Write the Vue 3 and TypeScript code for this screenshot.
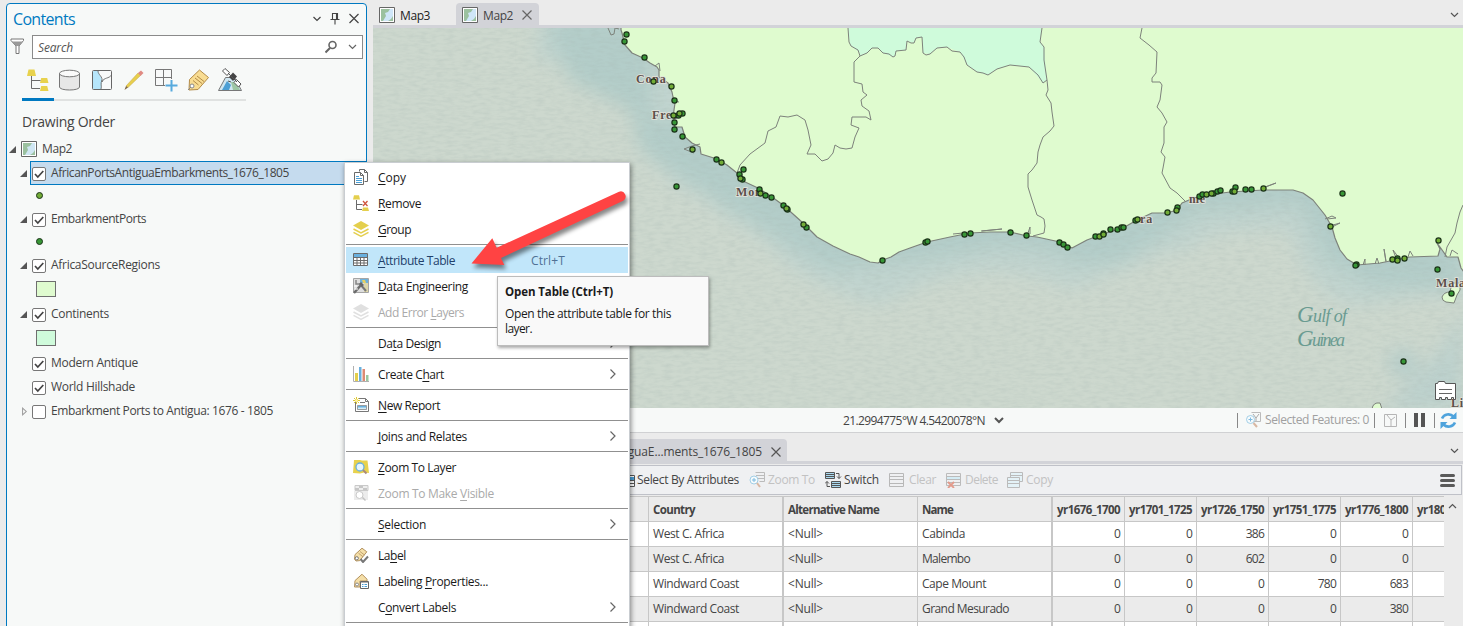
<script setup lang="ts">
import type { Directive } from 'vue'

// Tunes tracking so that a label takes up the given width in pixels.
const vFit: Directive<HTMLElement, number> = {
  mounted(el, { value }) {
    const count = (el.textContent ?? '').length
    if (!value || !count) return
    const width = el.getBoundingClientRect().width
    el.style.letterSpacing = `${(value - width) / count}px`
  },
}

interface MenuItem { label?: string; w?: number; icon?: string; sub?: boolean; off?: boolean; hot?: boolean; key?: string }
interface Layer { label: string; w: number; arrow?: 'open' | 'closed'; checked: boolean; selected?: boolean; symbol?: string }

const tagShape = '<path d="M1.5 12.2 2 7.6 9 1.2 13.8 4.8 6.8 13.6 3 14z" fill="#f5dfa8" stroke="#b3925f"/><path d="M7 4.5 11.5 8M5.5 6.2l4.5 3.6" stroke="#b3925f" stroke-width=".8"/><circle cx="3.8" cy="11.3" r="1.6" fill="#fff" stroke="#777"/>'

const icons: Record<string, string> = {
  copy: '<path d="M6.500 2.500v-2h5l3 3v9h-3" fill="#fff" stroke="#6a6a6a"/><path d="M11.500.500v3h3" stroke="#6a6a6a"/><path d="M1.500 3.500h6l3 3v9h-9z" fill="#fff" stroke="#6a6a6a"/><path d="M7.500 3.500v3h3" stroke="#6a6a6a"/><path d="M3 7.500h3M3 9.500h6M3 11.500h6M3 13.500h6" stroke="#4a9fd6"/>',
  remove: '<path d="M0 4.500 1 .3h5l1 4.200z" fill="#e4cf4d"/><path d="M3.500 5v9.500H9M3.500 9.500h6" stroke="#6a6a6a"/><path d="m10 6 4.500 5M14.500 6 10 11" stroke="#d0553e" stroke-width="1.300"/><path d="m9 16 1-3.500h5l1 3.500z" fill="#e4cf4d"/>',
  group: '<path d="M8 0 16 4.500 8 9 0 4.500z" fill="#e4cf4d"/><path d="m.5 8 7.500 4L15.500 8M.5 11.300l7.500 4 7.500-4" stroke="#e4cf4d" stroke-width="1.500"/>',
  groupOff: '<path d="M8 0 16 4.500 8 9 0 4.500z" fill="#e0e0e0"/><path d="m.5 8 7.500 4L15.500 8M.5 11.300l7.500 4 7.500-4" stroke="#e0e0e0" stroke-width="1.500"/>',
  table: '<path d="M.5 1.500h14v12H.5z" fill="#fff"/><path d="M1 2h13v3H1z" fill="#69b0de"/><path d="M.5 1.500h14v12H.5zM.5 5.500h14M.5 8.500h14M.5 11h14M4 5v8M7.500 5v8M11 5v8" stroke="#6a6a6a"/>',
  engineering: '<path d="M.5.500h15v14H.5z" fill="#dedede" stroke="#a5a5a5"/><path d="M7 1h8v4H7z" fill="#6db2dd"/><path d="M11 5h4v9h-4z" fill="#ddd6a9"/><path d="M9 2h3l1 3h-3z" fill="#e8d061"/><path d="m1 15 7-8" stroke="#6b6b6b" stroke-width="2.400"/><path d="m7 6 6 7" stroke="#777" stroke-width="2"/><path d="M3 2v4h4" stroke="#888" stroke-width="1.500"/><path d="m6 6 2-2 3 3-2 2z" fill="#666"/><path d="M1 8h3M2 11h3" stroke="#fff"/>',
  chart: '<path d="M.5 0v15.500H16" stroke="#b0b0b0"/><path d="M2 7h3v8H2z" fill="#e4cf4d"/><path d="M6 1h2.500v14H6z" fill="#69b0de"/><path d="M9.500 3H12v12H9.500z" fill="#dd8a74"/><path d="M13 9h2.500v6H13z" fill="#9bc7a0"/>',
  report: '<path d="M2.500 5v9.500h13v-10l-3-3H6" fill="#fff" stroke="#777"/><path d="M12.500 1.500v3h3" stroke="#777"/><path d="M4.500 8.500h9v4h-9z" fill="#d4edf8" stroke="#777" stroke-width=".7"/><path d="M5 9h8v1.500H5z" fill="#69b0de"/><path d="M7 5.500h5" stroke="#777"/><path d="M3.500 0v7M0 3.500h7M1 1l5 5M6 1 1 6" stroke="#dfc93a"/><circle cx="3.500" cy="3.500" r="1.500" fill="#fff3a0"/>',
  zoomLayer: '<path d="M1 1h6l2 .5h5.500L16 14l-5-.5-4 1L0 14z" fill="#e8d24d"/><circle cx="7" cy="8" r="4" fill="#e7f6fd" stroke="#69b0de" stroke-width="1.300"/><path d="m10 11 3.500 3.500" stroke="#a98a7c" stroke-width="2"/>',
  zoomVisible: '<path d="M2 .5h13v5H2z" fill="#eee" stroke="#c9c9c9"/><path d="M2 3h4v2H2zM10 3h4v2h-4zM6 1h4v2H6z" fill="#c6c6c6"/><path d="M1 6h14v9H1z" fill="#ececec"/><circle cx="6.500" cy="10" r="3.500" fill="#fff" stroke="#c9c9c9"/><path d="m9.500 12.500 3 3" stroke="#c2c2c2" stroke-width="1.500"/>',
  label: tagShape + '<path d="m7.500 12 2.500 3 5-5.500" stroke="#777" stroke-width="2"/>',
  labelProps: '<path d="M1.500 14 2 7.600 9 1.200l5 5V8H7v6z" fill="#f5dfa8" stroke="#b3925f"/><circle cx="4" cy="11.500" r="1.500" fill="#fff" stroke="#888"/><path d="M7.500 8.500h8v7h-8z" fill="#fff" stroke="#666"/><path d="M8 8h7v1.500H8z" fill="#666"/><path d="M9 11.500h1.500m1 0H14M9 13.500h1.500m1 0H14" stroke="#4a9fd6"/>',
}

const menu: MenuItem[] = [
  { label: '_Copy', w: 28, icon: 'copy' },
  { label: '_Remove', w: 43, icon: 'remove' },
  { label: '_Group', w: 33, icon: 'group' },
  {},
  { label: '_Attribute Table', w: 77, icon: 'table', hot: true, key: 'Ctrl+T' },
  { label: '_Data Engineering', w: 90, icon: 'engineering' },
  { label: 'Add Error _Layers', w: 86, icon: 'groupOff', off: true },
  {},
  { label: 'Da_ta Design', w: 63, sub: true },
  {},
  { label: 'Create C_hart', w: 66, icon: 'chart', sub: true },
  {},
  { label: '_New Report', w: 62, icon: 'report' },
  {},
  { label: '_Joins and Relates', w: 89, sub: true },
  {},
  { label: '_Zoom To Layer', w: 78, icon: 'zoomLayer' },
  { label: 'Zoom To Make _Visible', w: 116, icon: 'zoomVisible', off: true },
  {},
  { label: '_Selection', w: 48, sub: true },
  {},
  { label: 'La_bel', w: 28, icon: 'label' },
  { label: 'Labeling _Properties...', w: 110, icon: 'labelProps' },
  { label: 'C_onvert Labels', w: 78, sub: true },
  {},
]

function mnemonic(label: string): [string, string, string] {
  const i = label.indexOf('_')
  return [label.slice(0, i), label[i + 1], label.slice(i + 2)]
}

const layers: Layer[] = [
  { label: 'AfricanPortsAntiguaEmbarkments_1676_1805', w: 238, arrow: 'open', checked: true, selected: true, symbol: 'port lime' },
  { label: 'EmbarkmentPorts', w: 95, arrow: 'open', checked: true, symbol: 'port' },
  { label: 'AfricaSourceRegions', w: 109, arrow: 'open', checked: true, symbol: 'swatch region' },
  { label: 'Continents', w: 58, arrow: 'open', checked: true, symbol: 'swatch continent' },
  { label: 'Modern Antique', w: 87, checked: true },
  { label: 'World Hillshade', w: 84, checked: true },
  { label: 'Embarkment Ports to Antigua: 1676 - 1805', w: 222, arrow: 'closed', checked: false },
]

const years = ['yr1676_1700', 'yr1701_1725', 'yr1726_1750', 'yr1751_1775', 'yr1776_1800']
const rows = [
  { country: 'West C. Africa', cw: 71, name: 'Cabinda', nw: 43, v: [0, 0, 386, 0, 0] },
  { country: 'West C. Africa', cw: 71, name: 'Malembo', nw: 48, v: [0, 0, 602, 0, 0] },
  { country: 'Windward Coast', cw: 86, name: 'Cape Mount', nw: 64, v: [0, 0, 0, 780, 683] },
  { country: 'Windward Coast', cw: 86, name: 'Grand Mesurado', nw: 87, v: [0, 0, 0, 0, 380] },
]

// x, y, and 1 for a port with Antigua embarkments
const ports: number[][] = [
  [626, 34], [624, 41], [644, 57], [653, 81, 1], [671, 86, 1], [674, 100], [678, 115], [682, 113], [673, 115, 1], [679, 113, 1],
  [674, 122], [674, 129], [682, 136], [692, 149, 1], [716, 159], [721, 162, 1], [743, 169], [739, 174], [742, 179], [740, 178, 1],
  [676, 186], [759, 189], [760, 193, 1], [765, 195], [771, 197], [783, 205], [787, 209], [786, 208, 1], [806, 227], [803, 224, 1], [882, 260],
  [925, 242], [927, 241], [964, 234], [970, 233], [1010, 232], [1026, 235], [1059, 242], [1063, 244], [1067, 247],
  [1095, 236], [1099, 236, 1], [1103, 233], [1103, 234, 1], [1110, 229], [1117, 229], [1121, 227], [1123, 227], [1135, 220], [1137, 219, 1],
  [1167, 212, 1], [1177, 207], [1176, 210, 1], [1199, 196], [1202, 194], [1206, 194, 1], [1213, 193], [1211, 193, 1], [1217, 191], [1220, 190],
  [1232, 191], [1235, 187], [1234, 191, 1], [1245, 189], [1251, 189], [1263, 188, 1], [1342, 193], [1330, 226, 1],
  [1356, 264], [1355, 265], [1397, 258], [1392, 259, 1], [1397, 260, 1], [1404, 258, 1], [1438, 240, 1], [1437, 269], [1451, 293], [1403, 361],
]

const coast = 'L621 30 622 33 625 45 632 53 643 58 650 63 657 67 659 70 659 77 668 83 672 92 673 97 675 103 673 117 675 127 682 127 685 137 692 143 700 147 701 154 717 159 727 165 737 173 743 181 758 188 772 197 783 205 793 214 803 223 817 237 833 246 850 254 859 257 870 262 878 263 883 260 891 257 899 252 910 248 927 242 950 237 970 233 990 232 1010 232 1027 236 1037 237 1060 242 1072 248 1087 240 1103 234 1123 228 1137 220 1152 213 1167 213 1177 210 1182 203 1189 200 1200 196 1230 192 1263 190 1293 190 1303 193 1313 200 1325 215 1332 227 1335 238 1340 250 1347 259 1357 265 1380 263 1410 257 1438 256 1440 249 1437 243 1440 247 1447 257 1458 257 1461 268 1464 272'
</script>

<template>
  <div class="app">
    <aside class="contents">
      <header class="title">
        <span v-fit="62">Contents</span>
        <svg width="46" height="14" viewBox="0 0 46 14" fill="none" stroke="#444">
          <path d="m1.500 5 3.500 3.500L8.500 5" stroke-width="1.200" />
          <path d="M20.500 1.500h5v6h-5zM18.500 7.500h9M23 8v4.500M24.500 2v5" stroke-width="1.100" />
          <path d="m37.500 2 9 9M46.500 2l-9 9" stroke-width="1.200" />
        </svg>
      </header>
      <div class="search">
        <svg class="funnel" width="15" height="17" viewBox="0 0 15 17">
          <path d="M1 1h12.500v1.500L9 8v7.500H6V8L1 2.500z" fill="#fff" stroke="#777" /><path d="M2 3.500h11L9 8H6z" fill="#999" />
        </svg>
        <div class="field">
          <i v-fit="35">Search</i>
          <svg width="32" height="14" viewBox="0 0 32 14" fill="none" stroke="#666">
            <circle cx="7.500" cy="5" r="3.500" stroke-width="1.600" /><path d="m5 8-4.500 4.500" stroke-width="2" /><path d="m24 5 3.500 3.500L31 5" stroke-width="1.200" />
          </svg>
        </div>
      </div>
      <svg class="views" width="226" height="38" viewBox="21 67 226 38" fill="none">
        <path d="M54 100h192" stroke="#e0e2e1" stroke-width="2" /><path d="M22 99.500h32" stroke="#0079c1" stroke-width="3" />
        <path d="m27 76 1.500-6.500h6L36 76zM40 83l1.200-5h6l1.300 5zM40 91l1.200-5h6l1.300 5z" fill="#e8d24d" /><path d="M31.500 76v12.500H40M31.500 80.500h9" stroke="#6a6a6a" />
        <path d="M59.500 73v14c0 4 20 4 20 0V73" fill="#e7e7e7" stroke="#777" /><ellipse cx="69.500" cy="73.500" rx="10" ry="3.300" fill="#fafafa" stroke="#777" />
        <path d="M92.500 70.500h19v19h-19z" fill="#f8f9f9" /><path d="M93 71h5l4 9-1 9h-8z" fill="#b6e6fb" /><path d="M98 71c0 4 5 5 4 11 2-5 7-3 9.500-7M102 80c-2 4 0 6-1 9" stroke="#777" /><rect x="92.500" y="70.500" width="19" height="19" rx="1" stroke="#666" />
        <path d="m126 86 12-13 2.500 2.500-12.500 12z" fill="#e8cf4d" stroke="#c2a545" stroke-width=".5" /><path d="m126 86-1.500 4 3.500-2.500z" fill="#7c643f" /><path d="m138 73 3-2.500 2.500 2.500-3 3z" fill="#e08a83" />
        <path d="M155.500 69.500h16v16h-16zM163.500 69.500v16M155.500 77.500h16" fill="#f8f9f9" stroke="#777" /><path d="M165 79h11v10h-11z" fill="#f7f9f8" /><path d="M163.500 69.500v16M155.500 77.500h16" stroke="#777" /><path d="M171.500 80v11.500M165.500 85.500h12" stroke="#57aadd" stroke-width="2" />
        <path d="m189.500 79.500 10-9.500 9 7.500-10.500 12-9 .5z" fill="#f8dc92" stroke="#b38b47" /><path d="m197 76 7 5.500M195 78l7 5.500M193 80.500l5.500 4.500" stroke="#b38b47" /><circle cx="192" cy="86" r="2" fill="#fff" stroke="#888" /><path d="m191 87-3 3" stroke="#888" />
        <path d="m218.500 90.500 7-13h9l7 13z" fill="#d1e7f1" stroke="#777" /><path d="m222 90 5-9 4 4-2 5z" fill="#4d9fd4" /><path d="M231 82h5l4 8h-7z" fill="#9ec7a5" /><path d="m225 68.500 4.500 4-2.500 3-4.500-4.500zM236.500 79.500l4.500 4.500-2.500 3-4.500-4.500z" fill="#fff" stroke="#555" /><path d="m229 77 4-4.500 4 4-4 4.500z" fill="#444" /><path d="m228 73 9 9M231 82l-3-1" stroke="#555" />
      </svg>
      <h2><span v-fit="93">Drawing Order</span></h2>
      <div class="row root">
        <i class="tri open" />
        <svg class="mapicon" width="16" height="16" viewBox="0 0 16 16"><path d="M.5.500h15v15H.5z" fill="#fff" stroke="#666" /><path d="M2 2h12v12H2z" fill="#cfe6f3" /><path d="M2 2h9L9 5 6 6l1 3-3 5H2zM9 14l3-2 2-3v5z" fill="#9bc19f" /></svg>
        <span v-fit="30">Map2</span>
      </div>
      <template v-for="l in layers" :key="l.label">
        <div class="row" :class="{ selected: l.selected }">
          <i class="tri" :class="l.arrow" />
          <div class="body">
            <span class="check"><svg v-if="l.checked" width="12" height="12" viewBox="0 0 12 12"><path d="m2 6 2.800 3L10.300 3" fill="none" stroke="#444" stroke-width="1.700" /></svg></span>
            <span v-fit="l.w">{{ l.label }}</span>
          </div>
        </div>
        <div v-if="l.symbol" class="symrow" :class="{ tall: l.symbol.startsWith('swatch') }"><b :class="l.symbol" /></div>
      </template>
    </aside>

    <main>
      <nav class="tabs">
        <div v-for="t in ['Map3', 'Map2']" :key="t" class="tab" :class="{ active: t === 'Map2' }">
          <svg width="16" height="16" viewBox="0 0 16 16"><path d="M.5.500h15v15H.5z" fill="#fff" stroke="#666" /><path d="M2 2h12v12H2z" fill="#cfe6f8" /><path d="M2 2h9L9 5 6 6l1 3-3 5H2zM9 14l3-2 2-3v5z" fill="#9bc19f" /></svg>
          <span v-fit="30">{{ t }}</span>
          <svg v-if="t === 'Map2'" class="x" width="10" height="10" viewBox="0 0 10 10"><path d="m.5.500 9 9M9.500.500l-9 9" stroke="#666" stroke-width="1.200" /></svg>
        </div>
      </nav>
      <svg class="map" width="1090" height="380" viewBox="373 28 1090 380">
        <defs>
          <filter id="paper" x="0" y="0" width="100%" height="100%">
            <feTurbulence type="fractalNoise" baseFrequency="0.11 0.34" numOctaves="2" seed="8" />
            <feColorMatrix values="0 0 0 0 .38  0 0 0 0 .47  0 0 0 0 .44  .7 0 0 0 -.26" />
          </filter>
          <filter id="soft" x="-10%" y="-20%" width="120%" height="140%"><feGaussianBlur stdDeviation="9" /></filter>
        </defs>
        <path d="M373 28h1090v380H373z" fill="#cdd8ce" />
        <g filter="url(#soft)" fill="none">
          <path :d="'M540 20 ' + coast" stroke="#c1d4cf" stroke-width="80" stroke-linejoin="round" />
          <path d="M545 20 570 80 630 110 640 150 700 190 780 240 830 270 910 262 1000 247 1040 250 1080 265 1120 262 1200 212 1300 205 1325 260 1370 285 1463 290V120H650V20z" fill="#b3cdc9" />
          <path d="M1440 350 1463 310v100h-80z" fill="#bdd1cd" /><circle cx="1403" cy="363" r="14" fill="#b5cdca" />
        </g>
        <path d="M373 28h1090v380H373z" filter="url(#paper)" opacity=".7" />
        <path :d="'M621 27 ' + coast + ' V27z'" fill="#dffbcf" />
        <path d="M848 27 850 45 860 53V56L867 53 872 48 878 48 883 53 893 57 895 56 896 51 906 50 907 41 914 43 916 38 922 37 923 53 930 54 937 48 947 47 960 52 967 65 977 72 988 75 997 69 1010 65 1029 67 1043 83 1047 80 1044 47 1040 42 1042 27z" fill="#cffbdb" />
        <g fill="none" stroke="#7d827b" stroke-width="1" stroke-linejoin="round">
          <path :d="'M621 27 ' + coast" stroke-width="1.200" />
          <path d="M848 28 849 42 851 46 858 50 860 56 867 53 872 48 878 48 883 53 889 54 893 57 895 56 896 51 906 50 907 41 911 43 914 43 916 38 922 37 923 53 926 55 930 54 937 48 947 47 952 51 960 52 964 57 967 65 977 72 983 73 988 75 997 69 1010 65 1029 67 1038 75 1043 83 1047 80 1044 60 1044 47 1040 42 1042 28M1047 80 1048 90 1046 95 1051 103 1052 112 1054 126 1050 131 1043 137 1040 145 1038 152 1037 163 1032 170 1028 174 1028 187 1032 200 1037 215 1041 217 1044 219 1045 226 1044 233 1033 236" />
          <path d="M1142 28 1140 38 1149 45 1157 52 1156 73 1152 78 1152 82 1160 82 1162 85 1160 100 1157 107 1162 113 1167 122 1164 127 1164 143 1161 152 1165 157 1163 168 1162 173 1170 188 1177 193 1185 201" />
          <path d="M860 56 854 62 854 82 862 84 863 92 867 95 861 100 862 106 869 111 871 120 866 117 852 117 851 125 859 128 855 137 852 148 846 149 840 148 835 145 833 153 828 159 822 161 815 154 807 154 811 145 808 130 805 120 797 115 788 117 780 116 776 127 768 131 765 143 750 154 740 165 737 173" />
          <path d="M1463 205 1460 212 1457 223 1455 233 1447 247 1445 257M608 28 611 35 614 34 615 28 619 29M655 66l4-3 1 8M673 101l6 1M684 149l8-3 8-2M684 149l10 4M953 234l10-1M981 231l21-2-20 2M1027 236l3-9v7M1263 188l13-5-11 4M1325 219l7-3 4 2-9 1M1332 227l8-4-7 2M1363 265l2-6v6M1375 264l2-6 2 6M1386 262l-2-13 2 12M1396 258l-3-8 6 8M1408 257l2-6 3 5M1450 256l2-6 6 4" />
          <path d="M1442 297q2-5 8-5l2-9h8v7l-3 5-3 8-8-1q-4-1-4-5z" fill="#dffbcf" /><path d="M1372 409q1-7 8-6l2 6" fill="#dffbcf" />
        </g>
        <g class="place">
          <text x="636" y="83">Cona</text><text x="652" y="119">Free</text><text x="736" y="196">Mon</text><text x="1140" y="223">ra</text><text x="1189" y="203">me</text><text x="1436" y="287">Mala</text><text x="1451" y="407">Li</text>
        </g>
        <g class="gulf"><text x="1297" y="322" textLength="50"><tspan class="cap">G</tspan>ulf of</text><text x="1297" y="346" textLength="48"><tspan class="cap">G</tspan>uinea</text></g>
        <circle v-for="(p, i) in ports" :key="i" :cx="p[0] + 0.5" :cy="p[1] + 0.5" r="2.600" :fill="p[2] ? '#72ac36' : '#379636'" stroke="#1b3318" stroke-width="1.200" />
        <path d="M1435.500 383.500h2l1-2h6l1 2h10v16h-2v-2h-2v2h-4v-2h-2v2h-4v-2h-2v2h-4z" fill="#fff" stroke="#555" /><path d="M1439 389.500h13M1439 393.500h13" stroke="#666" />
      </svg>
      <div class="status">
        <span class="coord" v-fit="142">21.2994775°W 4.5420078°N</span>
        <svg class="chev" width="10" height="7" viewBox="0 0 10 7"><path d="m1 1 4 4 4-4" fill="none" stroke="#555" stroke-width="2" /></svg>
        <i class="bar" />
        <svg class="sel" width="17" height="16" viewBox="0 0 17 16" fill="none"><path d="M6.500.500h9v9h-9" stroke="#bbb" /><path d="m8 2 3 4 3-4M11 6v3" stroke="#aaa" /><circle cx="5.500" cy="7.500" r="4" fill="#f6fbfd" stroke="#a3cfe6" /><path d="M3.500 7.500h4m-2-2v4" stroke="#7fbbe0" /><path d="m8.500 11 3.500 4" stroke="#d9b8a3" stroke-width="2" /></svg>
        <span class="dim" v-fit="104">Selected Features: 0</span>
        <i class="bar b2" />
        <svg class="frame" width="13" height="13" viewBox="0 0 13 13" fill="none" stroke="#b5b5b5"><path d="M.5.500h12v12H.5zM3 1l4 5 4-3M7 6v6" /></svg>
        <i class="bar b3" /><i class="pause" /><i class="bar b4" />
        <svg class="sync" width="17" height="17" viewBox="0 0 17 17" fill="none" stroke="#4ea3dc" stroke-width="2.600"><path d="M2 6.500C4 2 10 1 13.500 4.500M15 10.500C13 15 7 16 3.500 12.500" /><path d="M16.500 0v7h-7zM.5 17v-7h7z" fill="#4ea3dc" stroke="none" /></svg>
      </div>
      <nav class="tabs lower">
        <div class="tab active"><span v-fit="223">AfricanPortsAntiguaE...ments_1676_1805</span><svg class="x" width="10" height="10" viewBox="0 0 10 10"><path d="m.5.500 9 9M9.500.500l-9 9" stroke="#555" stroke-width="1.200" /></svg></div>
      </nav>
      <div class="tools">
        <svg class="t0" width="16" height="16" viewBox="0 0 16 16" fill="none"><path d="M.5 3.500h13v11H.5z" fill="#fff" stroke="#555" /><path d="M1 5h12v3H1z" fill="#4a9fd6" /><path d="M1 8.500h12M1 11.500h12" stroke="#555" /></svg>
        <span v-fit="102">Select By Attributes</span>
        <svg class="t1" width="16" height="16" viewBox="0 0 16 16" fill="none"><path d="M6.500.500h9v9h-5M7 3.500h8M9 6.500h6" stroke="#bbb" /><circle cx="5" cy="8" r="4" fill="#f6fbfd" stroke="#a3cfe6" /><path d="M3 8h4M5 6v4" stroke="#7fbbe0" /><path d="m8 11 3 4" stroke="#d9b8a3" stroke-width="2" /></svg>
        <span class="gray" v-fit="47">Zoom To</span>
        <svg class="t2" width="17" height="16" viewBox="0 0 17 16" fill="none"><path d="M.5.500h9v6h-9zM6.500 9.500h9v6h-9z" fill="#a9d9f0" stroke="#555" /><path d="M.5 2.500h9m-9 2h9M6.500 11.500h9m-9 2h9" stroke="#555" /><path d="M11 1.500h3v5m-2-2 2 2 2-2M5 14.500H2v-5m-2 2 2-2 2 2" stroke="#555" /></svg>
        <span v-fit="35">Switch</span>
        <svg class="t3" width="16" height="14" viewBox="0 0 16 14" fill="none" stroke="#b8b8b8"><path d="M.5.500h14v13H.5zM.5 3.500h14m-14 3h14m-14 4h14" /></svg>
        <span class="gray" v-fit="27">Clear</span>
        <svg class="t4" width="16" height="16" viewBox="0 0 16 16" fill="none"><path d="M.5 1.500h14v12H.5zM.5 4.500h14m-14 3h14m-14 3h14" stroke="#bbb" /><path d="M1 5h13v2H1z" fill="#d4ecf5" /><path d="m2 10 6 6M8 10l-6 6" stroke="#e29a8b" stroke-width="1.800" /></svg>
        <span class="gray" v-fit="33">Delete</span>
        <svg class="t5" width="16" height="16" viewBox="0 0 16 16" fill="none"><path d="M3.500.500h12v9h-12z" fill="#e4f2f7" stroke="#bbb" /><path d="M3.500 3.500h12" stroke="#bbb" /><path d="M.5 5.500h12v10H.5z" fill="#e4f2f7" stroke="#bbb" /><path d="M.5 8.500h12m-12 3h12" stroke="#bbb" /></svg>
        <span class="gray" v-fit="27">Copy</span>
        <svg class="burger" width="15" height="13" viewBox="0 0 15 13"><path d="M1.500 1.500h12m-12 5h12m-12 5h12" stroke="#5a5a5a" stroke-width="3" stroke-linecap="round" /></svg>
      </div>
      <div class="grid">
        <div class="tr th">
          <span class="c0" /><span class="c1"><em v-fit="42">Country</em></span><span class="c2"><em v-fit="91">Alternative Name</em></span><span class="c3"><em v-fit="31">Name</em></span>
          <span v-for="y in years" :key="y" class="cy"><em v-fit="63">{{ y }}</em></span><span class="cy last"><em v-fit="63">yr1801_1825</em></span>
        </div>
        <div v-for="r in rows" :key="r.name" class="tr">
          <span class="c0" /><span class="c1"><em v-fit="r.cw">{{ r.country }}</em></span><span class="c2"><em v-fit="35">&lt;Null&gt;</em></span><span class="c3"><em v-fit="r.nw">{{ r.name }}</em></span>
          <span v-for="(v, i) in r.v" :key="i" class="cy"><em v-fit="String(v).length * 6.100">{{ v }}</em></span><span class="cy last" />
        </div>
        <div class="tr"><span class="c0" /><span class="c1" /><span class="c2" /><span class="c3" /><span v-for="y in years" :key="y" class="cy" /><span class="cy last" /></div>
      </div>
      <svg class="up" width="9" height="6" viewBox="0 0 9 6"><path d="m1 5 3.500-3.500L8 5" fill="none" stroke="#555" stroke-width="1.200" /></svg>
      <svg class="down d1" width="9" height="6" viewBox="0 0 9 6"><path d="m1 1 3.500 3.500L8 1" fill="none" stroke="#555" stroke-width="1.200" /></svg>
      <svg class="down d2" width="9" height="6" viewBox="0 0 9 6"><path d="m1 1 3.500 3.500L8 1" fill="none" stroke="#555" stroke-width="1.200" /></svg>
    </main>

    <div class="menu">
      <template v-for="(m, i) in menu" :key="i">
        <hr v-if="!m.label">
        <div v-else class="item" :class="{ off: m.off, hot: m.hot }">
          <svg width="16" height="16" viewBox="0 0 16 16" fill="none" v-html="m.icon ? icons[m.icon] : ''" />
          <span v-fit="m.w!">{{ mnemonic(m.label)[0] }}<u>{{ mnemonic(m.label)[1] }}</u>{{ mnemonic(m.label)[2] }}</span>
          <span v-if="m.key" v-fit="34" class="key">{{ m.key }}</span>
          <svg v-if="m.sub" class="more" width="8" height="12" viewBox="0 0 8 12"><path d="m1.500 1.500 4.500 4.500-4.500 4.500" fill="none" stroke="#666" stroke-width="1.200" /></svg>
        </div>
      </template>
    </div>
    <svg class="arrow" width="180" height="100" viewBox="460 180 180 100">
      <path d="M471.500 263.500 492.300 238.300 496.700 247.700 619 191.700A5 5 0 0 1 623.200 200.700L501 258 504.300 265z" fill="#ff4343" />
    </svg>
    <div class="tip">
      <b v-fit="108">Open Table (Ctrl+T)</b>
      <p><span v-fit="166">Open the attribute table for this</span><br><span v-fit="27">layer.</span></p>
    </div>
  </div>
</template>

<style>
body { overflow: hidden; background: #ebebeb; }
</style>

<style scoped>
* { box-sizing: border-box; }
.app { position: relative; width: 1463px; height: 626px; overflow: hidden; display: flex; background: #ebebeb; color: #444; font: 12px/16px "Open Sans", "Noto Sans", sans-serif; }
span, em, b, i { white-space: nowrap; }
svg { flex: none; display: block; }
.contents { width: 361px; height: 640px; margin: 3px 0 0 6px; flex: none; border: 1px solid #0079c1; border-radius: 4px 4px 0 0; background: #f7f9f8; }
.title { display: flex; justify-content: space-between; align-items: center; height: 31px; padding: 0 6px; font-size: 16px; color: #0079c1; }
.title span { margin-top: -2px; }
.title svg { overflow: visible; margin: -2px 2px 0 0; }
.search { display: flex; padding: 0 3px; height: 24px; }
.funnel { margin: 3px 7px 0 0; }
.field { flex: 1; display: flex; align-items: center; justify-content: space-between; border: 1px solid #8a8a8a; background: #fff; padding: 0 5px; color: #555; }
.field i { margin-top: 2px; }
.views { margin: 8px 0 0 14px; }
h2 { margin: 7px 0 5px 15px; height: 20px; font: 14px/20px "Open Sans", sans-serif; color: #444; }
.row { height: 24px; display: flex; align-items: center; padding-left: 13px; }
.row span { display: inline-block; }
.root { padding-left: 2px; margin-top: 1px; }
.mapicon { margin: 0 5px; }
.tri { width: 7px; height: 7px; flex: none; margin-bottom: -1px; }
.tri.open { background: #555; clip-path: polygon(100% 0, 100% 100%, 0 100%); }
.tri.closed { height: 9px; background: #999; clip-path: polygon(30% 0, 100% 50%, 30% 100%, 30% 80%, 44% 74%, 80% 50%, 44% 24%, 44% 80%, 30% 90%); }
.body { display: flex; align-items: center; flex: 1; height: 24px; margin-left: 3px; border: 1px solid transparent; padding-left: 1px; }
.selected .body { background: #c5dbee; border-color: #0079c1; border-right: 0; }
.check { width: 14px; height: 14px; margin: 2px 5px 0 0; border: 1px solid #777; border-radius: 2px; background: #fff; flex: none; }
.symrow { height: 22px; padding: 7px 0 0 29px; }
.symrow.tall { height: 25px; padding-top: 4px; }
.port { display: block; width: 7px; height: 7px; border-radius: 50%; border: 1.500px solid #1b3318; background: #379636; }
.lime { background: #72ac36; }
.swatch { display: block; width: 20px; height: 16px; border: 1px solid #6f6f6f; }
.region { background: #dffbcf; }
.continent { background: #cffbdb; }
main { position: relative; width: 1090px; margin-left: 6px; flex: none; }
.tabs { height: 28px; border-bottom: 3px solid #d2d3d8; display: flex; align-items: flex-end; }
.tab { height: 22px; display: flex; align-items: center; padding: 0 6px; width: 83px; color: #222; }
.tab span { margin: 3px 0 0 5px; }
.tab svg { margin-top: 1px; }
.tab.active { background: #d2d3d8; border-radius: 4px 4px 0 0; color: #444; }
.tab .x { margin-left: 9px; }
.map { font-family: "Liberation Serif", serif; }
.place { font-size: 12px; font-weight: bold; fill: #5b4f4a; letter-spacing: .800px; paint-order: stroke; stroke: #e4e4dc; stroke-width: 1.500px; }
.gulf { font-size: 18px; font-style: italic; fill: #6a9b91; }
.cap { font-size: 23px; }
.status { height: 25px; background: #f7f9f8; border-bottom: 1px solid #d0d1d3; display: flex; align-items: center; }
.coord { margin: 2px 0 0 470px; }
.chev { margin-left: 9px; }
.bar { width: 1px; height: 15px; background: #888; margin-left: 233px; flex: none; }
.sel { margin: 0 3px 0 7px; }
.dim { color: #a0a0a0; }
.b2 { margin-left: 5px; }
.frame { margin-left: 9px; }
.b3 { margin-left: 8px; }
.pause { width: 11px; height: 14px; border: solid #555; border-width: 0 4px; margin-left: 8px; flex: none; }
.b4 { margin-left: 9px; }
.sync { margin-left: 5px; }
.lower { height: 31px; }
.lower .tab { width: 414px; justify-content: flex-end; border-radius: 0 4px 0 0; }
.lower .x { margin-top: 3px; }
.tools { height: 30px; margin: 1px 1px 1px 0; border: 1px solid #bfc1c8; background: #eff0f2; display: flex; align-items: center; padding-left: 247px; }
.tools .gray { color: #c2c2c2; }
.t1 { margin: 0 3px 0 10px; }
.t2 { margin: 0 2px 0 10px; }
.t3 { margin: 0 4px 0 10px; }
.t4 { margin: 0 3px 0 10px; }
.t5 { margin: 0 3px 0 9px; }
.burger { margin-left: auto; margin-right: 6px; }
.grid { width: 1071px; overflow: hidden; border-top: 1px solid #c7c7c7; }
.tr { display: flex; height: 25px; width: 1120px; background: #fff; border-bottom: 1px solid #c7c7c7; line-height: 23px; }
.tr:nth-child(odd) { background: #ebebeb; }
.tr:last-child { background: #fff; }
.tr > span { border-right: 1px solid #c7c7c7; padding-left: 4px; height: 24px; flex: none; }
em { font-style: normal; display: inline-block; }
.th { font-weight: bold; line-height: 26px; }
.th em { font-size: 11.500px; }
.c0 { width: 276px; }
.tr > .c1 { width: 135px; border-right-width: 2px; }
.c2 { width: 134px; }
.tr > .c3 { width: 135px; border-right-width: 2px; }
.tr > .cy { width: 72px; text-align: right; padding: 0 4px 0 0; }
.tr > .last { text-align: left; padding-left: 4px; }
.up { position: absolute; left: 1075px; top: 503px; }
.down { position: absolute; left: 1077px; }
.d1 { top: 12px; }
.d2 { top: 448px; }
.menu { position: absolute; left: 344px; top: 162px; width: 286px; height: 480px; padding: 1px; background: #fff; border: 1px solid #c9cdd1; box-shadow: 1px 2px 5px #0007; color: #1a1a1a; }
.item { height: 26px; display: flex; align-items: center; padding-left: 7px; }
.item span { display: inline-block; margin: 2px 0 0 9px; flex: none; }
.item u { text-underline-offset: 2px; }
.item.off { color: #aaa; }
.item.hot { background: #c1e6fa; color: #21416b; }
.item .key { margin-left: 76px; color: #4f7195; }
.more { margin-left: auto; margin-right: 11px; }
hr { border: 0; height: 1px; margin: 2px 0; background: #909090; }
.arrow { position: absolute; left: 460px; top: 180px; filter: drop-shadow(2px 4px 2px #0007); }
.tip { position: absolute; left: 497px; top: 276px; width: 212px; height: 70px; border: 1px solid #bcbcbc; background: #f9f9f9; box-shadow: 1px 2px 3px #0005; padding: 7px; color: #1a1a1a; }
.tip b, .tip span { display: inline-block; }
.tip b { font-size: 11.500px; }
.tip p { margin: 6px 0 0; line-height: 15px; }
.tip p span { line-height: 15px; vertical-align: top; }
</style>
